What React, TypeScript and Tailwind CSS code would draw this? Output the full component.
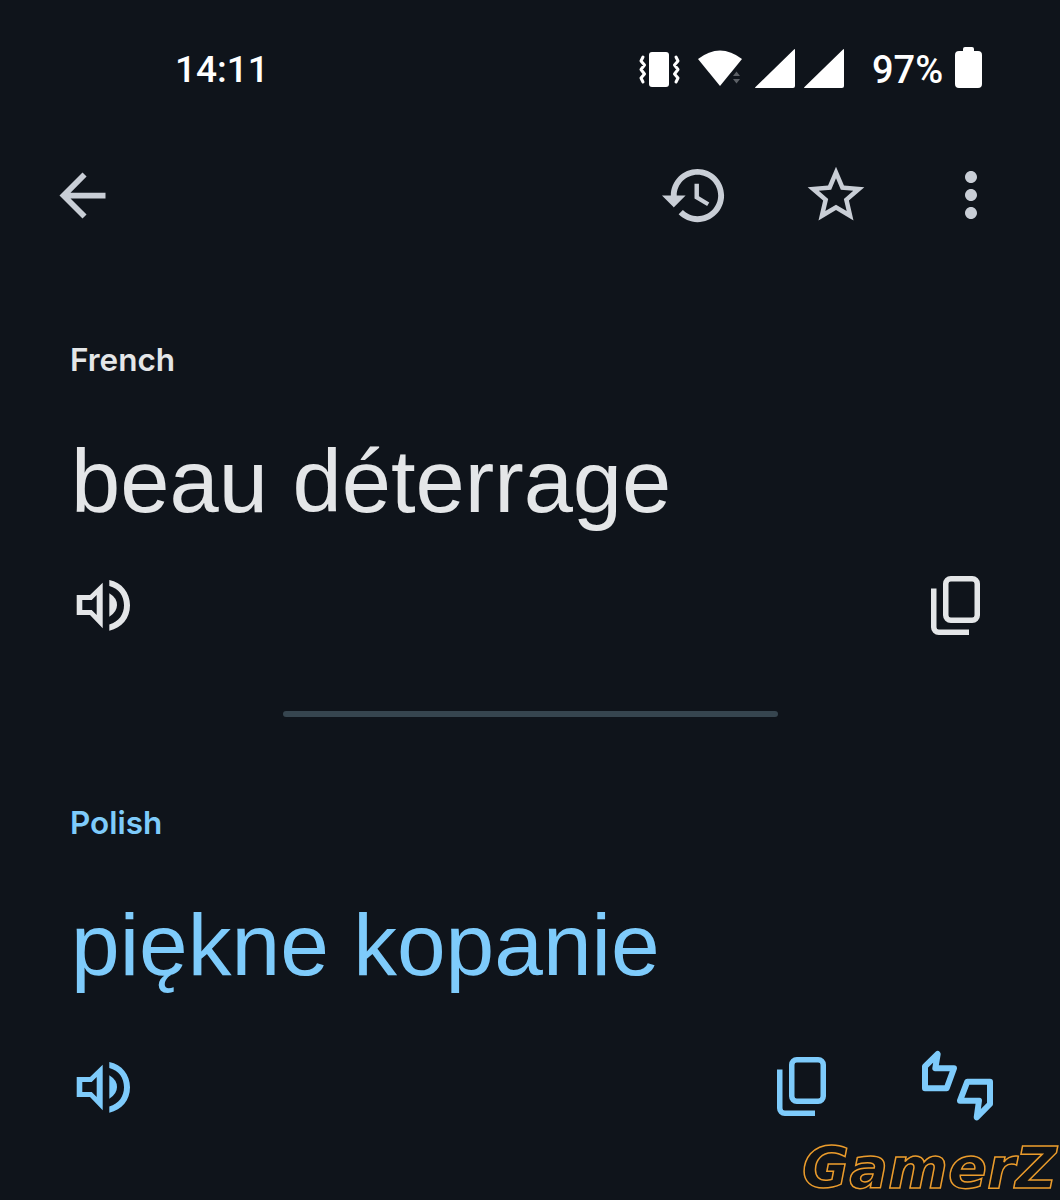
const Copy = ({ c }: { c: string }) => (
  <svg width="52" height="61" viewBox="0 0 52 61" fill="none" stroke={c} strokeWidth="5.5">
    <rect x="15.750" y="2.750" width="31.500" height="41.500" rx="5" />
    <path d="M3.750 12.500V51.250a5 5 0 0 0 5 5H39" />
  </svg>
);

const Speaker = ({ c }: { c: string }) => (
  <svg width="60" height="60" viewBox="0 0 60 60" fill={c}>
    <path fillRule="evenodd" d="M1.700 17H15L27.700 4.700V50.300L15 37H1.700ZM7.300 22V32H16.700L21.700 37V17L16.700 22Z" />
    <path d="M34.300 15.300Q42 20 42 27Q42 34 34.300 38.700Z" />
    <path d="M34.300 2C47 4.500 55 15 55 27.300C55 40 47 50 34.300 52.700V46.500C44 44 49 36 49 27.300C49 18 44 10.500 34.300 8Z" />
  </svg>
);

const Thumbs = ({ c }: { c: string }) => (
  <svg width="85" height="80" viewBox="0 0 85 80" fill="none" stroke={c} strokeWidth="6" strokeLinejoin="round">
    <path d="M10 22.300L22.700 10L20.300 24.300H39L31.700 44.300H10Z" />
    <path d="M45 56.700L52.300 37.700H75V60L61.700 73.300L64 56.700Z" />
  </svg>
);

const Signal = () => (
  <svg width="40" height="40" viewBox="0 0 40 40" fill="#fff">
    <path d="M39 1.500Q40 0.500 40 2V38Q40 40 38 40H1Q-0.500 40 0.500 39Z" />
  </svg>
);

const StatusBar = () => (
  <div className="h-[159px] pt-[48px] pl-[175px] flex items-start font-['Roboto',sans-serif] text-white">
    <span className="w-[464px] h-[40px] text-[37px] leading-[44px] font-medium">14:11</span>
    <svg width="41" height="37" viewBox="0 0 41 37" fill="#fff" className="mt-[3px]">
      <rect x="10" y="1" width="20" height="35" rx="3" />
      <path d="M4 6L2 10L5.500 14L2 18.500L5.500 23L2 27L4 31M37 6L39 10L35.500 14L39 18.500L35.500 23L39 27L37 31" fill="none" stroke="#fff" strokeWidth="3" strokeLinecap="round" strokeLinejoin="round" />
    </svg>
    <svg width="46" height="40" viewBox="0 0 46 40" className="ml-[18px]" fill="#fff">
      <path d="M0 11Q22 -6 44 11L22 38Z" />
      <path d="M38.500 23.500L42 28H35ZM35 31H42L38.500 35.500Z" fill="#5c6066" />
    </svg>
    <div className="ml-[11px]"><Signal /></div>
    <div className="ml-[9px]"><Signal /></div>
    <span className="ml-[28px] w-[83px] h-[40px] text-[38px] leading-[44px] font-medium">97%</span>
    <svg width="27" height="41" viewBox="0 0 27 41" fill="#fff" className="-mt-[1px]">
      <path d="M8 4V2Q8 0 10 0H17Q19 0 19 2V4H23Q27 4 27 8V37Q27 41 23 41H4Q0 41 0 37V8Q0 4 4 4Z" />
    </svg>
  </div>
);

const TopBar = () => (
  <div className="h-[72px] flex items-center text-[#c9ced6]">
    <svg width="69" height="69" viewBox="0 0 24 24" fill="currentColor" className="ml-[48px]">
      <path d="M20 11H7.830l5.590-5.590L12 4l-8 8 8 8 1.410-1.410L7.830 13H20v-2z" />
    </svg>
    <svg width="71" height="71" viewBox="0 0 24 24" fill="currentColor" className="ml-[542px]">
      <path d="M13 3c-4.970 0-9 4.030-9 9H1l3.890 3.890.07.140L9 12H6c0-3.870 3.130-7 7-7s7 3.130 7 7-3.130 7-7 7c-1.930 0-3.680-.79-4.940-2.060l-1.420 1.420C8.270 19.990 10.510 21 13 21c4.970 0 9-4.030 9-9s-4.030-9-9-9zm-1 5v5l4.280 2.540.72-1.210-3.500-2.080V8H12z" />
    </svg>
    <svg width="68" height="68" viewBox="0 0 24 24" fill="currentColor" className="ml-[72px]">
      <path d="M22 9.240l-7.190-.62L12 2 9.190 8.630 2 9.240l5.460 4.730L5.820 21 12 17.270 18.180 21l-1.630-7.030L22 9.240zM12 15.400l-3.760 2.270 1-4.280-3.320-2.880 4.380-.38L12 6.100l1.710 4.040 4.380.38-3.320 2.880 1 4.280L12 15.400z" />
    </svg>
    <svg width="72" height="72" viewBox="0 0 24 24" fill="currentColor" className="ml-[65px]">
      <path d="M12 8c1.100 0 2-.9 2-2s-.9-2-2-2-2 .9-2 2 .9 2 2 2zm0 2c-1.100 0-2 .9-2 2s.9 2 2 2 2-.9 2-2-.9-2-2-2zm0 6c-1.100 0-2 .9-2 2s.9 2 2 2 2-.9 2-2-.9-2-2-2z" />
    </svg>
  </div>
);

export default function App() {
  return (
    <div className="relative w-[1060px] h-[1200px] bg-[#0f141b] font-['Liberation_Sans',sans-serif]">
      <StatusBar />
      <TopBar />

      <div className="mt-[109px] pl-[70px] h-[40px] text-[31.500px] leading-[40px] font-['Inter',sans-serif] font-semibold text-[#e4e6e8]">French</div>
      <div className="mt-[57px] pl-[71px] h-[90px] text-[88.500px] leading-[90px] text-[#e4e6e8]">beau déterrage</div>
      <div className="mt-[49px] h-[61px] flex items-start pl-[75px] pr-[78px] justify-between">
        <div className="mt-[2px]"><Speaker c="#e4e6e8" /></div>
        <Copy c="#e4e6e8" />
      </div>

      <div className="mt-[74px] mx-auto w-[495px] h-[6px] bg-[#36454f] rounded-full" />

      <div className="mt-[86px] pl-[70px] h-[40px] text-[31.500px] leading-[40px] font-['Inter',sans-serif] font-semibold text-[#7ecbfb]">Polish</div>
      <div className="mt-[57px] pl-[71px] h-[90px] text-[87.500px] leading-[90px] text-[#7ecbfb]">piękne kopanie</div>
      <div className="mt-[67px] flex items-start pl-[75px]">
        <div className="mt-[3px]"><Speaker c="#7ecbfb" /></div>
        <div className="ml-[641px]"><Copy c="#7ecbfb" /></div>
        <div className="ml-[87px] -mt-[13px]"><Thumbs c="#7ecbfb" /></div>
      </div>

      <div className="absolute right-[3px] bottom-[4px] text-[57.500px] leading-[54px] italic font-bold font-['DejaVu_Sans',sans-serif] text-[#0f1216] [-webkit-text-stroke:1.500px_#eb9c2c]">GamerZ</div>
    </div>
  );
}
